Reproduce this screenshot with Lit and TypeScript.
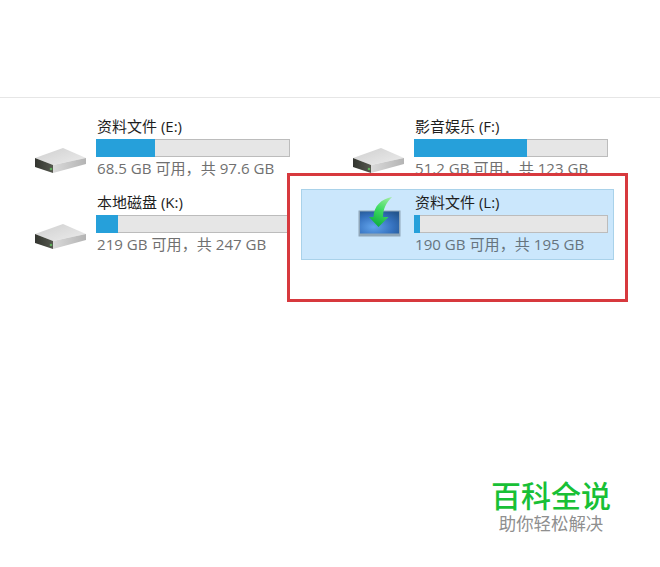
import { LitElement, html, css } from "lit";
import { customElement } from "lit/decorators.js";

const drive = html`<svg class="drive" width="54" height="27" viewBox="0 0 54 27">
  <defs>
    <linearGradient id="dt" x1="0" y1="0" x2="1" y2="1"><stop offset="0" stop-color="#cfcfcf"/><stop offset="1" stop-color="#ececec"/></linearGradient>
    <linearGradient id="dr" x1="0" y1="0" x2="1" y2="0"><stop offset="0" stop-color="#dadada"/><stop offset="1" stop-color="#b4b4b4"/></linearGradient>
    <linearGradient id="df" x1="0" y1="0" x2="1" y2="0"><stop offset="0" stop-color="#33352f"/><stop offset="1" stop-color="#55584f"/></linearGradient>
    <filter id="soft"><feGaussianBlur stdDeviation="0.4"/></filter>
  </defs>
  <g filter="url(#soft)">
    <path d="M1 11 29 1 52 11 19 18Z" fill="url(#dt)"/>
    <path d="M19 18 52 11V17L19 26Z" fill="url(#dr)"/>
    <path d="M1 11 19 18V26L1 20Z" fill="url(#df)"/>
    <circle cx="17" cy="22" r="1.300" fill="#5fae5c"/>
  </g>
</svg>`;

const setupIcon = html`<svg class="setup" width="44" height="42" viewBox="0 0 44 42">
  <defs>
    <radialGradient id="sc" cx="0.35" cy="0.7" r="0.85"><stop offset="0" stop-color="#62a4ec"/><stop offset="0.6" stop-color="#3571be"/><stop offset="1" stop-color="#24568f"/></radialGradient>
    <linearGradient id="ar" x1="0.8" y1="0" x2="0.4" y2="1"><stop offset="0" stop-color="#9aeb9c"/><stop offset="0.45" stop-color="#3fdc62"/><stop offset="1" stop-color="#0fae3f"/></linearGradient>
  </defs>
  <rect x="0.500" y="14.500" width="42" height="26" fill="#8fa6b8"/>
  <rect x="2" y="15.500" width="39" height="22" fill="url(#sc)"/>
  <path d="M34 1C23 3 16 10 15.500 21H11L20.500 31 30.500 21H25C25 13 28 7 34 1Z" fill="url(#ar)"/>
</svg>`;

interface Vol { name: string; info: string; pct: number; selected?: boolean; }

const vols: Vol[] = [
  { name: "资料文件 (E:)", info: "68.5 GB 可用，共 97.6 GB", pct: 30.5 },
  { name: "影音娱乐 (F:)", info: "51.2 GB 可用，共 123 GB", pct: 59 },
  { name: "本地磁盘 (K:)", info: "219 GB 可用，共 247 GB", pct: 11.3 },
  { name: "资料文件 (L:)", info: "190 GB 可用，共 195 GB", pct: 3, selected: true },
];

@customElement("app-root")
export class AppRoot extends LitElement {
  static styles = css`
    :host {
      display: block;
      position: relative;
      width: 660px;
      height: 567px;
      overflow: hidden;
      background: #fff;
      font-family: "Open Sans", "Noto Sans CJK SC", sans-serif;
    }
    .top { height: 97px; border-bottom: 1px solid #e6e6e6; }
    .grid {
      display: grid;
      grid-template-columns: 313px 313px;
      gap: 5px;
      margin: 15px 0 0 -17px;
    }
    .tile {
      display: flex;
      box-sizing: border-box;
      height: 71px;
      border: 1px solid transparent;
      padding-top: 2px;
    }
    .tile.sel {
      position: relative;
      z-index: 2;
      background: #cbe7fc;
      border-color: #a9d2ea;
    }
    .slot { width: 112px; flex: none; }
    .drive { display: block; margin: 31px 0 0 50px; }
    .setup { display: block; margin: 4px 0 0 56px; }
    .body { display: flex; flex-direction: column; width: 194px; }
    .name { font-size: 15px; line-height: 20px; height: 20px; color: #1e1e1e; padding-left: 1px; white-space: nowrap; }
    .bar {
      box-sizing: border-box;
      height: 18px;
      margin-top: 3px;
      background: #e6e6e6;
      border: 1px solid #bcbcbc;
      display: flex;
    }
    .fill { background: #26a0da; margin: -1px 0 -1px -1px; }
    .info { font-size: 15.100px; line-height: 20px; margin-top: 1px; color: #707070; padding-left: 1px; white-space: nowrap; }
    .sel .info { color: #66747e; }
    .callout {
      position: absolute;
      z-index: 1;
      left: 287px;
      top: 173px;
      width: 341px;
      height: 129px;
      box-sizing: border-box;
      border: 3px solid #d7393e;
      background: #fff;
    }
    .mark {
      position: absolute;
      left: 491px;
      top: 477px;
      width: 120px;
      display: flex;
      flex-direction: column;
      align-items: center;
      font-family: "Noto Sans CJK SC", sans-serif;
    }
    .mark b { font-size: 30px; line-height: 35px; color: #18c036; font-weight: 500; white-space: nowrap; }
    .mark span { font-size: 17.400px; line-height: 22px; color: #8f8f8f; white-space: nowrap; }
  `;

  render() {
    return html`
      <div class="top"></div>
      <div class="grid">
        ${vols.map(v => html`
          <div class="tile ${v.selected ? "sel" : ""}">
            <div class="slot">${v.selected ? setupIcon : drive}</div>
            <div class="body">
              <div class="name">${v.name}</div>
              <div class="bar"><div class="fill" style="width:${v.pct}%"></div></div>
              <div class="info">${v.info}</div>
            </div>
          </div>`)}
      </div>
      <div class="callout"></div>
      <div class="mark"><b>百科全说</b><span>助你轻松解决</span></div>
    `;
  }
}
